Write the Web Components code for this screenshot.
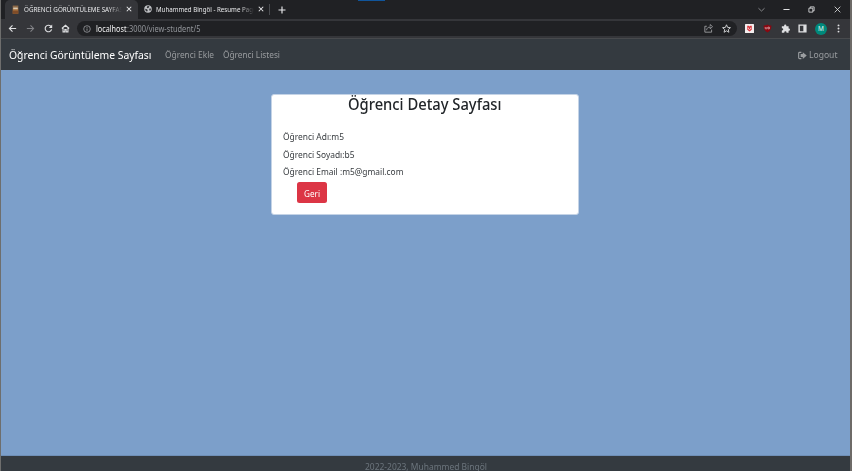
<!DOCTYPE html>
<html lang="tr">
<head>
<meta charset="utf-8">
<title>Öğrenci Görüntüleme Sayfası</title>
<style>
html,body{margin:0;height:100%;overflow:hidden}
body{font-family:"Noto Sans","Open Sans",sans-serif}
</style>
</head>
<body>
<app-window></app-window>
<script>
function define(name, html, ready) {
  customElements.define(name, class extends HTMLElement {
    connectedCallback() {
      if (this.shadowRoot) return;
      this.attachShadow({mode: 'open'}).innerHTML = html;
      if (ready) ready.call(this, this.shadowRoot);
    }
  });
}

/* Single line of text condensed to a given width. */
define('fit-text', `<style>:host{display:block;white-space:nowrap;flex:none}span{display:inline-block;transform-origin:0 50%}</style><span><slot></slot></span>`, function (r) {
  const w = +this.getAttribute('w'), s = r.querySelector('span');
  const now = s.getBoundingClientRect().width;
  s.style.transform = `scaleX(${w / now})`;
  this.style.width = w + 'px';
});

const icons = {
  back: '<path d="M14.5 8H2.5M8 2.5 2.5 8 8 13.5" stroke-width="2"/>',
  forward: '<path d="M1.5 8h12M8 2.5 13.5 8 8 13.5" stroke-width="1.8"/>',
  reload: '<path d="M13.5 9.5A5.8 5.8 0 1 1 12 3.8L13.3 5" stroke-width="2"/><path d="M14.5 1v6h-6z" fill="currentColor" stroke="none"/>',
  home: '<path d="M1.500 8 8 2.300 14.500 8M3.6 7v7h3.200V10h2.400v4h3.200V7" stroke-width="1.900"/>',
  info: '<circle cx="8" cy="8" r="6.6" stroke-width="1.5"/><path d="M8 7v4.5M8 4v1.6" stroke-width="1.7"/>',
  close: '<path d="m2 2 12 12M14 2 2 14" stroke-width="2.8"/>',
  exit: '<path d="m1.5 1.5 13 13M14.5 1.5l-13 13" stroke-width="1.8"/>',
  plus: '<path d="M8 1v14M1 8h14" stroke-width="2.3"/>',
  chevron: '<path d="m1 5 7 6.5L15 5" stroke-width="1.7"/>',
  minimize: '<path d="M1 8h14" stroke-width="2.2"/>',
  restore: '<path d="M2 5h9v9H2zM5 5V2h9v9h-3" stroke-width="1.8"/>',
  share: '<path d="M5 4H1.5v10.5h12V10" stroke-width="1.5"/><path d="M4.5 11c.4-4 3-5.500 6.500-5.500V8.500L15.200 4.700 11 1v3" stroke-width="1.4"/>',
  star: '<path d="m8 1.400 2 4.600 5 .5-3.800 3.300 1.100 4.900L8 12.100l-4.300 2.600 1.100-4.900L1 6.500 6 6z" stroke-width="1.7"/>',
  pocket: '<rect width="16" height="16" rx="1" fill="#f4eeee" stroke="none"/><path d="M4 3.200h2.600L8 4.600l1.400-1.400H12v7L8 13.300l-4-3.100z" fill="#d9333b" stroke="none"/><path d="M6 6.500v2l2 1.300 2-1.300v-2" stroke="#fff" stroke-width="1.300"/>',
  shield: '<path d="M8 .8c2 1.400 4.300 1.700 7 2 0 6-2 9.700-7 12.500C3 12.500 1 8.800 1 2.800c2.700-.3 5-.6 7-2z" fill="#8b0710" stroke="none"/><path d="M4 5.300v2.500q0 1 1.500 1T7 7.800V5.300M9 5.500v3.200h1.200q1.800 0 1.800-1.600T10.200 5.500z" stroke="#eed5d6" stroke-width="1.100"/>',
  puzzle: '<path d="M1.500 4h4V3a2 2 0 0 1 4 0v1h4v4h.5a2 2 0 0 1 0 4h-.5v3.500H9.800V15a2 2 0 0 0-4 0v.5H1.500v-4H2a2 2 0 0 0 0-4h-.5z" fill="currentColor" stroke="none"/>',
  panel: '<path d="M2 2h12v12H2z" stroke-width="2.500"/><path d="M9.500 2H14v12H9.500z" fill="currentColor" stroke="none"/>',
  dots: '<g fill="currentColor" stroke="none"><circle cx="8" cy="2.500" r="1.700"/><circle cx="8" cy="8" r="1.700"/><circle cx="8" cy="13.500" r="1.700"/></g>',
  globe: '<circle cx="8" cy="8" r="7.500" fill="#bfc1c4" stroke="none"/><path d="M2.500 7.500 6 8.500l1.500 2-1.500 3-3.300-3zM6.500 2.500l4-.5-.5 3-3 1.500-1.500-1.500zM10 7.500l4-.5-.5 3.500-2 1.500z" fill="#303236" stroke="none"/>',
  jar: '<path d="M3 1h10v4H3z" fill="#8e6a48" stroke="none"/><path d="M3 5h10v10.500H3z" fill="#a8713d" stroke="none"/><path d="M4 4.500h8v3H4z" fill="#d8c7ae" stroke="none"/><path d="M3 10h10v5.500H3z" fill="#7f4c28" stroke="none"/>',
  logout: '<path d="M6 2.500H2.800Q1.200 2.500 1.200 4v8q0 1.500 1.600 1.500H6" stroke-width="2"/><path d="M8.500 2 15.500 8l-7 6v-3.500H4.700v-5h3.800z" fill="currentColor" stroke="none"/>'
};
define('ui-icon', `<style>:host{display:block;flex:none}svg{display:block;fill:none;stroke:currentColor}</style><svg viewBox="0 0 16 16"></svg>`, function (r) {
  const s = r.querySelector('svg');
  const size = this.getAttribute('size') || 9;
  s.setAttribute('width', size); s.setAttribute('height', size);
  s.innerHTML = icons[this.getAttribute('name')];
});

define('browser-tab', `<style>
:host{display:flex;align-items:center;box-sizing:border-box;height:19px;color:#e8e9eb;font-size:7.200px;line-height:16px;padding:0 3px 1px 6px;flex:none}
:host([active]){background:#35363a;border-radius:5px 5px 0 0}
.title{margin-left:4px;width:98px;overflow:hidden;-webkit-mask-image:linear-gradient(90deg,#000 86%,transparent);mask-image:linear-gradient(90deg,#000 86%,transparent);margin-right:auto}
</style><slot name="icon"></slot><div class="title"><slot></slot></div><ui-icon name="close" size="6"></ui-icon>`);

define('tab-strip', `<style>
:host{display:flex;align-items:center;height:19px;background:#202124;color:#e8e9eb;position:relative;padding-left:4px}
.mark{position:absolute;left:357px;top:0;width:27px;height:1px;background:#10559b}
browser-tab{width:133px;padding-right:6px}
browser-tab+browser-tab{width:127px;padding-right:1px}
.sep{width:1px;height:11px;background:#4b4d51;margin:0 8px 0 4px}
.win{margin-left:auto;display:flex;align-items:center;padding-right:9px;height:16px}
</style>
<browser-tab active><ui-icon slot="icon" name="jar" size="9"></ui-icon><fit-text w="101">ÖĞRENCİ GÖRÜNTÜLEME SAYFASI</fit-text></browser-tab>
<browser-tab><ui-icon slot="icon" name="globe" size="8"></ui-icon><fit-text w="100.500">Muhammed Bingöl - Resume Page</fit-text></browser-tab>
<div class="sep"></div><ui-icon name="plus" size="8"></ui-icon>
<div class="win"><ui-icon name="chevron" size="7" style="color:#a5a6a8"></ui-icon><ui-icon name="minimize" size="7" style="margin-left:18px"></ui-icon><ui-icon name="restore" size="7" style="margin-left:18px"></ui-icon><ui-icon name="exit" size="7" style="margin-left:19px"></ui-icon></div>
<div class="mark"></div>`);

define('address-bar', `<style>
:host{display:flex;align-items:center;box-sizing:border-box;height:20px;background:#35363a;color:#dfe0e2;border-bottom:1px solid #484a4d;padding-left:7px}
.omni{display:flex;align-items:center;margin-left:7px;width:660px;height:15px;background:#202124;border-radius:8px;box-sizing:border-box;padding:0 6px 0 6px;font-size:8px;line-height:14px;color:#92959a;flex:none}
.avatar{width:12px;height:12px;border-radius:50%;background:#00897b;color:#e2f3f1;font-size:6.500px;line-height:12px;text-align:center;margin-left:8px}
</style>
<ui-icon name="back" size="9"></ui-icon><ui-icon name="forward" size="9" style="margin-left:9px;color:#838488"></ui-icon><ui-icon name="reload" size="9" style="margin-left:9px"></ui-icon><ui-icon name="home" size="9" style="margin-left:8px"></ui-icon>
<div class="omni"><ui-icon name="info" size="8" style="color:#a4a6a9"></ui-icon><fit-text w="30.500" style="color:#f2f2f3;margin-left:5px">localhost</fit-text><fit-text w="73.500" style="margin-right:auto">:3000/view-student/5</fit-text><ui-icon name="share" size="9" style="color:#a5a6a9"></ui-icon><ui-icon name="star" size="9" style="margin-left:9px;color:#d0d1d3"></ui-icon></div>
<ui-icon name="pocket" size="9" style="margin-left:8px"></ui-icon><ui-icon name="shield" size="9" style="margin-left:9px"></ui-icon><ui-icon name="puzzle" size="9" style="margin-left:9px"></ui-icon><ui-icon name="panel" size="9" style="margin-left:8px"></ui-icon><div class="avatar">M</div><ui-icon name="dots" size="9" style="margin-left:7px"></ui-icon>`);

define('site-nav', `<style>
:host{display:flex;align-items:center;box-sizing:border-box;height:31px;background:#343a40;padding:1px 13px 0 8px;color:#9a9da0;font-size:8.900px;line-height:20px}
.brand{color:#fff;font-size:11.100px}
</style>
<fit-text class="brand" w="142.500">Öğrenci Görüntüleme Sayfası</fit-text>
<fit-text w="49" style="margin-left:13px">Öğrenci Ekle</fit-text><fit-text w="57" style="margin-left:9px">Öğrenci Listesi</fit-text>
<ui-icon name="logout" size="9" style="margin-left:auto"></ui-icon><fit-text w="28.500" style="margin-left:2px">Logout</fit-text>`);

define('action-button', `<style>
:host{display:block}
button{display:flex;align-items:center;justify-content:center;width:30px;height:21px;padding:1px 0 0;border:0;border-radius:2.500px;background:#dc3545;color:#fff;font:8.900px "Noto Sans",sans-serif}
</style><button><slot></slot></button>`);

define('student-card', `<style>
:host{display:block;box-sizing:border-box;width:308px;height:121px;background:#fff;border:1px solid #c4d3e6;border-radius:3px;color:#373b3f;font-size:8.900px}
h2{display:flex;justify-content:center;margin:0 0 14px;font-size:15.500px;font-weight:500;line-height:19px;color:#212529}
.body{display:flex;flex-direction:column;padding-left:11px;line-height:17.700px}
action-button{margin:1px 0 0 14px}
</style>
<h2><fit-text w="153.500">Öğrenci Detay Sayfası</fit-text></h2>
<div class="body"><fit-text w="61">Öğrenci Adı:m5</fit-text><fit-text w="71.500">Öğrenci Soyadı:b5</fit-text><fit-text w="120.500">Öğrenci Email :m5@gmail.com</fit-text>
<action-button><fit-text w="16">Geri</fit-text></action-button></div>`);

define('site-footer', `<style>
:host{display:flex;justify-content:center;height:15px;overflow:hidden;background:#343a40;color:#6c757d;font-size:8.900px;line-height:22px;box-sizing:border-box}
</style><fit-text w="122">2022-2023, Muhammed Bingöl</fit-text>`);

define('app-window', `<style>
:host{display:flex;flex-direction:column;box-sizing:border-box;width:852px;height:471px;border-left:1px solid #6e6e6d;border-right:2px solid #6e6b68}
main{flex:1;display:flex;justify-content:center;align-items:flex-start;padding:24px 1px 0 0;background:#7c9fca;box-sizing:border-box;border-bottom:1px solid #6f8fb7}
</style><tab-strip></tab-strip><address-bar></address-bar><site-nav></site-nav><main><student-card></student-card></main><site-footer></site-footer>`);
</script>
</body>
</html>
